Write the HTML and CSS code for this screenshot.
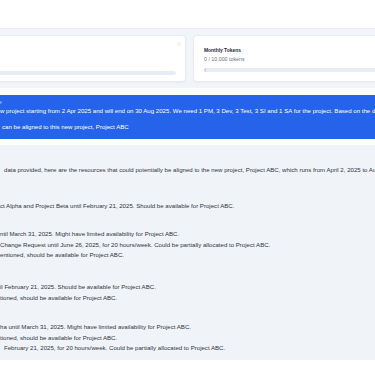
FILE: index.html
```html
<!DOCTYPE html>
<html lang="en">
<head>
    <meta charset="UTF-8">
    <meta name="viewport" content="width=device-width, initial-scale=1.0">
    <title>Resource Planner</title>
    <link rel="stylesheet" href="styles.css">
</head>
<body>

<header class="topbar"></header>

<section class="usage">
    <div class="usage-card usage-card-left">
        <span class="card-icon"></span>
        <div class="bar"></div>
    </div>
    <div class="usage-card">
        <h3 class="card-title">Monthly Tokens</h3>
        <p class="card-sub">0 / 10,000 tokens</p>
        <div class="bar"><div class="bar-fill" style="width: 1%"></div></div>
    </div>
</section>

<main class="chat">
    <div class="msg-user">
        <div class="msg-label">e</div>
        <p class="line">w project starting from 2 Apr 2025 and will end on 30 Aug 2025. We need 1 PM, 3 Dev, 3 Test, 3 SI and 1 SA for the project. Based on the data, list the resources that</p>
        <p class="line line-second">can be aligned to this new project, Project ABC</p>
    </div>

    <div class="msg-bot">
        <p class="line indent">data provided, here are the resources that could potentially be aligned to the new project, Project ABC, which runs from April 2, 2025 to August 30, 2025:</p>

        <div class="group group-pm">
            <p class="line">ct Alpha and Project Beta until February 21, 2025. Should be available for Project ABC.</p>
        </div>

        <div class="group group-dev">
            <p class="line">ntil March 31, 2025. Might have limited availability for Project ABC.</p>
            <p class="line">Change Request until June 26, 2025, for 20 hours/week. Could be partially allocated to Project ABC.</p>
            <p class="line">entioned, should be available for Project ABC.</p>
        </div>

        <div class="group group-test">
            <p class="line">il February 21, 2025. Should be available for Project ABC.</p>
            <p class="line">tioned, should be available for Project ABC.</p>
        </div>

        <div class="group group-si">
            <p class="line">ha until March 31, 2025. Might have limited availability for Project ABC.</p>
            <p class="line">tioned, should be available for Project ABC.</p>
            <p class="line indent">February 21, 2025, for 20 hours/week. Could be partially allocated to Project ABC.</p>
        </div>
    </div>
</main>

</body>
</html>
```

FILE: styles.css
```css
body {
    font-family: 'Liberation Sans', Arial, sans-serif;
    margin: 0;
    width: 375px;
    height: 366px;
    overflow: hidden;
    background-color: #ffffff;
    color: #374151;
}

p, h3 {
    margin: 0;
}

.topbar {
    height: 28px;
    background-color: #ffffff;
    border-bottom: 1px solid #eceff3;
}

.usage {
    display: flex;
    gap: 7px;
    margin-left: -24px;
    padding: 6px 0;
    background-color: #f1f4f8;
}

.usage-card {
    position: relative;
    flex: 0 0 210px;
    height: 47px;
    box-sizing: border-box;
    padding: 11px 10px 0;
    background-color: #ffffff;
    border: 1px solid #e8ecf1;
    border-radius: 4px;
    box-shadow: 0 1px 2px rgba(15, 23, 42, 0.04);
}

.usage-card-left {
    padding-top: 31px;
    padding-right: 9px;
}

.card-icon {
    position: absolute;
    top: 6px;
    right: 4px;
    width: 4px;
    height: 4px;
    border-radius: 1px;
    background-color: #f3f5f8;
}

.card-title {
    font-size: 4.9px;
    line-height: 8px;
    font-weight: 700;
    color: #1f2937;
}

.card-sub {
    font-size: 5.3px;
    line-height: 9px;
    color: #6b7280;
}

.bar {
    height: 4px;
    margin-top: 4px;
    border-radius: 2px;
    background-color: #e8edf3;
    overflow: hidden;
}

.bar-fill {
    height: 100%;
    background-color: #cbd5e1;
}

.chat {
    padding-top: 7px;
}

.line {
    font-size: 6.1px;
    line-height: 10.5px;
    white-space: nowrap;
}

.indent {
    padding-left: 4px;
}

.msg-user {
    height: 44px;
    box-sizing: border-box;
    padding-top: 3px;
    background-color: #2563eb;
    color: #ffffff;
}

.msg-label {
    font-size: 5px;
    line-height: 8px;
    margin-left: -1px;
    color: rgba(255, 255, 255, 0.7);
}

.line-second {
    margin-top: 5px;
    padding-left: 2px;
}

.msg-bot {
    margin-top: 6px;
    height: 215px;
    box-sizing: border-box;
    padding-top: 20px;
    background-color: #f0f3f8;
    color: #2f353f;
}

.group-pm {
    margin-top: 25.5px;
}

.group-dev {
    margin-top: 17.5px;
}

.group-test {
    margin-top: 21.5px;
}

.group-si {
    margin-top: 19px;
}
```
